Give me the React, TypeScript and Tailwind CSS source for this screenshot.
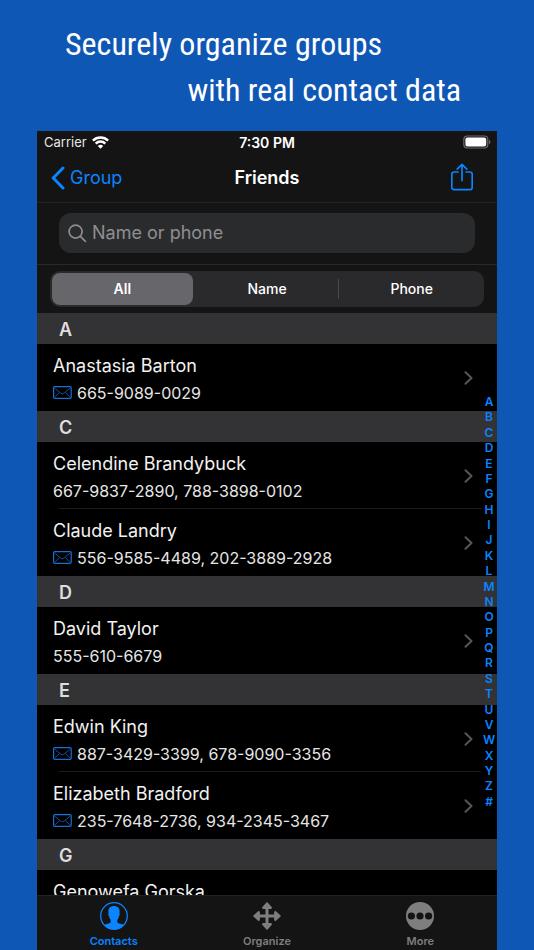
import React, { useState } from "react"
import clsx from "clsx"

type Contact = {
  name: string
  phones: string
  mail?: boolean
}

type Section = {
  letter: string
  contacts: Contact[]
}

const sections: Section[] = [
  { letter: "A", contacts: [{ name: "Anastasia Barton", phones: "665-9089-0029", mail: true }] },
  {
    letter: "C",
    contacts: [
      { name: "Celendine Brandybuck", phones: "667-9837-2890, 788-3898-0102" },
      { name: "Claude Landry", phones: "556-9585-4489, 202-3889-2928", mail: true }
    ]
  },
  { letter: "D", contacts: [{ name: "David Taylor", phones: "555-610-6679" }] },
  {
    letter: "E",
    contacts: [
      { name: "Edwin King", phones: "887-3429-3399, 678-9090-3356", mail: true },
      { name: "Elizabeth Bradford", phones: "235-7648-2736, 934-2345-3467", mail: true }
    ]
  },
  { letter: "G", contacts: [{ name: "Genowefa Gorska", phones: "" }] }
]

const letters = "ABCDEFGHIJKLMNOPQRSTUVWXYZ#".split("")
const filters = ["All", "Name", "Phone"]

const WifiIcon = () => (
  <svg className="mb-[2px]" width="17" height="13" viewBox="0 0 17 13" fill="none" stroke="#fff" strokeWidth="2.5" aria-hidden="true">
    <path d="M.9 4.6a10.8 10.8 0 0 1 15.2 0" />
    <path d="M3.7 7.600a6.800 6.800 0 0 1 9.600 0" />
    <path d="M8.500 12.800 5.800 10a3.900 3.900 0 0 1 5.400 0z" fill="#fff" stroke="none" />
  </svg>
)

const BatteryIcon = () => (
  <svg className="mb-[2px]" width="28" height="14" viewBox="0 0 28 14" aria-hidden="true">
    <rect x="0.800" y="1" width="24" height="12" rx="3.400" fill="none" stroke="#6b6b6b" strokeWidth="1.200" />
    <rect x="2.400" y="2.600" width="20.800" height="8.800" rx="2" fill="#fff" />
    <path d="M26 5v4c.8-.3 1.400-1.100 1.400-2s-.6-1.700-1.400-2z" fill="#6b6b6b" />
  </svg>
)

const BackIcon = () => (
  <svg width="14" height="24" viewBox="0 0 14 24" fill="none" stroke="currentColor" strokeWidth="3" strokeLinecap="round" strokeLinejoin="round" aria-hidden="true">
    <path d="M12 2 2.200 12 12 22" />
  </svg>
)

const ShareIcon = () => (
  <svg className="mb-[2px]" width="22" height="28" viewBox="0 0 22 28" fill="none" stroke="currentColor" strokeWidth="1.700" strokeLinecap="round" strokeLinejoin="round" aria-hidden="true">
    <path d="M7 9H3a2.200 2.200 0 0 0-2.200 2.200v13.200A2.200 2.200 0 0 0 3 26.600h16a2.200 2.200 0 0 0 2.200-2.200V11.200A2.200 2.200 0 0 0 19 9h-4" />
    <path d="M11 17.600V1.400M6.200 6.200 11 1.400l4.800 4.800" />
  </svg>
)

const SearchIcon = () => (
  <svg width="19" height="19" viewBox="0 0 19 19" fill="none" stroke="#8e8e93" strokeWidth="1.700" strokeLinecap="round" aria-hidden="true">
    <circle cx="7.600" cy="7.600" r="6.500" />
    <path d="m12.400 12.400 5 5" />
  </svg>
)

const MailIcon = () => (
  <svg width="19" height="13" viewBox="0 0 19 13" fill="none" stroke="#1670d8" aria-hidden="true">
    <rect x="0.600" y="0.600" width="17.600" height="11.800" rx="1.200" strokeWidth="1.200" />
    <path d="M1.500 2 7.600 7c1.100.9 2.400.9 3.500 0l6.200-5M1.500 11.300l5-4.700M17.300 11.300l-5-4.700" strokeWidth="0.900" strokeOpacity="0.8" />
  </svg>
)

const ChevronIcon = () => (
  <svg width="9" height="14" viewBox="0 0 9 14" fill="none" stroke="#56565a" strokeWidth="2" strokeLinecap="round" strokeLinejoin="round" aria-hidden="true">
    <path d="m1.500 1.200 6 5.800-6 5.800" />
  </svg>
)

const ContactsIcon = () => (
  <svg width="28" height="28" viewBox="0 0 28 28" aria-hidden="true">
    <circle cx="14" cy="14" r="13.300" fill="none" stroke="currentColor" strokeWidth="1.300" />
    <path
      d="M14 4c-3.700 0-5.800 2.300-5.600 5.600l.2 1.900c-.7.3-.4 2 .5 2.900.3 1.500.8 2.600 1.600 3.400v2.500c-.5 1.300-4.700 1.500-6.700 3.100A13.300 13.300 0 0 0 14 27.600a13.300 13.300 0 0 0 10-4.200c-2-1.600-6.200-1.800-6.700-3.100v-2.500c.8-.8 1.300-1.900 1.600-3.400.9-.9 1.200-2.600.5-2.900l.2-1.900C19.800 6.300 17.700 4 14 4z"
      fill="currentColor"
    />
  </svg>
)

const OrganizeIcon = () => (
  <svg width="28" height="28" viewBox="0 0 28 28" fill="currentColor" stroke="currentColor" strokeLinejoin="round" aria-hidden="true">
    <path d="M14 4v20M4 14h20" strokeWidth="3" />
    <path d="M14 1.400 17.800 5.800h-7.600zM14 26.600l3.800-4.400h-7.600zM1.400 14l4.400-3.800v7.600zM26.600 14l-4.400-3.800v7.600z" strokeWidth="2.200" />
  </svg>
)

const MoreIcon = () => (
  <svg width="28" height="28" viewBox="0 0 28 28" aria-hidden="true">
    <circle cx="14" cy="14" r="14" fill="currentColor" />
    <circle cx="5.400" cy="14" r="3.600" fill="#141414" />
    <circle cx="14" cy="14" r="3.600" fill="#141414" />
    <circle cx="22.600" cy="14" r="3.600" fill="#141414" />
  </svg>
)

const tabs = [
  { label: "Contacts", icon: <ContactsIcon /> },
  { label: "Organize", icon: <OrganizeIcon /> },
  { label: "More", icon: <MoreIcon /> }
]

const ContactRow = ({ contact, last }: { contact: Contact; last: boolean }) => (
  <li className="pl-4">
    <a href="#" className="relative flex h-[67px] items-center justify-between pr-6">
      <div className="pt-[3px]">
        <div className="text-lg leading-6 text-[#f2f2f2]">{contact.name}</div>
        <div className="mt-[3px] flex h-6 items-center gap-[5px] text-base leading-6 text-[#e6e6e6]">
          {contact.mail && <MailIcon />}
          <span>{contact.phones}</span>
        </div>
      </div>
      <ChevronIcon />
      {!last && <span className="absolute bottom-0 left-[6px] right-4 h-px bg-[#1c1c1e]" />}
    </a>
  </li>
)

const App = () => {
  const [filter, setFilter] = useState("All")
  const [tab, setTab] = useState("Contacts")
  const [query, setQuery] = useState("")

  return (
    <div className="flex h-screen flex-col bg-[#0f57b5] px-[37px] font-['Inter',sans-serif]">
      <h1 className="flex shrink-0 flex-col px-7 pt-[21px] pb-[18px] font-['Roboto_Condensed',Roboto,sans-serif] text-[32px] leading-[46px] text-white">
        <span>Securely organize groups</span>
        <span className="self-end pr-2">with real contact data</span>
      </h1>

      <div className="flex min-h-0 flex-1 flex-col overflow-hidden bg-black">
        <header className="shrink-0 bg-[#141414]">
          {/* Status bar */}
          <div className="grid h-6 grid-cols-3 items-center px-[6px] text-[13px] text-white">
            <div className="flex items-center gap-[5px] pl-px">
              <span className="text-[#e6e6e6]">Carrier</span>
              <WifiIcon />
            </div>
            <div className="text-center text-sm font-semibold">7:30 PM</div>
            <div className="flex justify-end">
              <BatteryIcon />
            </div>
          </div>

          <div className="grid h-12 grid-cols-3 items-center border-b border-[#222224] px-[14px] pb-[2px]">
            <button type="button" className="flex items-center gap-[5px] text-lg text-[#0a84ff]">
              <BackIcon />
              Group
            </button>
            <h2 className="text-center text-lg font-semibold text-white">Friends</h2>
            <button type="button" aria-label="Share" className="justify-self-end pr-[10px] text-[#0a84ff]">
              <ShareIcon />
            </button>
          </div>

          <div className="border-b border-[#29292b] px-[22px] pt-[10px] pb-[11px]">
            <label className="flex h-10 items-center gap-[5px] rounded-xl bg-[#2a2b2d] px-[9px]">
              <SearchIcon />
              <input
                type="text"
                aria-label="Name or phone"
                placeholder="Name or phone"
                value={query}
                onChange={(e) => setQuery(e.target.value)}
                className="min-w-0 flex-1 bg-transparent text-lg text-white outline-none placeholder:text-[#8e8e93]"
              />
            </label>
          </div>

          <div className="px-[13px] py-[6px]">
            <div className="flex h-9 gap-1 rounded-[10px] bg-[#2a2a2c] p-[2px]">
              {filters.map((item) => (
                <button
                  key={item}
                  type="button"
                  aria-pressed={filter === item}
                  onClick={() => setFilter(item)}
                  className={clsx(
                    "relative flex-1 rounded-lg text-sm text-white",
                    filter === item ? "bg-[#66666b] font-semibold" : "font-medium"
                  )}
                >
                  {item}
                  {item === "Phone" && filter !== "Phone" && (
                    <span className="absolute top-[6px] bottom-[6px] -left-[3px] w-px bg-[#48484b]" />
                  )}
                </button>
              ))}
            </div>
          </div>
        </header>

        <main className="relative min-h-0 flex-1 overflow-hidden">
          {sections.map((section) => (
            <section key={section.letter}>
              <h3 className="flex h-[31px] items-center bg-[#333335] pt-[2px] pl-[22px] text-lg font-semibold text-[#dedee0]">
                {section.letter}
              </h3>
              <ul>
                {section.contacts.map((contact, i) => (
                  <ContactRow key={contact.name} contact={contact} last={i === section.contacts.length - 1} />
                ))}
              </ul>
            </section>
          ))}

          {/* Alphabet index over the list */}
          <nav
            aria-label="Index"
            className="absolute top-0 right-0 bottom-1 my-auto flex h-[414px] w-4 flex-col items-center justify-between text-xs leading-[14px] font-semibold text-[#0a84ff]"
          >
            {letters.map((letter) => (
              <a key={letter} href="#">
                {letter}
              </a>
            ))}
          </nav>
        </main>

        <nav className="flex shrink-0 border-t border-[#222224] bg-[#141414]">
          {tabs.map((item) => (
            <button
              key={item.label}
              type="button"
              onClick={() => setTab(item.label)}
              className={clsx(
                "flex h-[54px] flex-1 flex-col items-center gap-[3px] pt-[6px] text-[11px] leading-4 font-semibold",
                tab === item.label ? "text-[#0a84ff]" : "text-[#7e7e7e]"
              )}
            >
              {item.icon}
              {item.label}
            </button>
          ))}
        </nav>
      </div>
    </div>
  )
}

export default App
